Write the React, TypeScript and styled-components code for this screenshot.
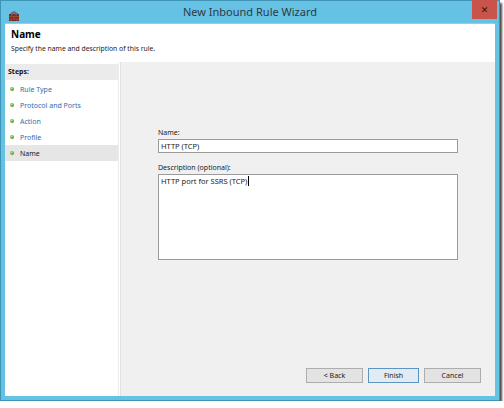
import styled, { createGlobalStyle } from "styled-components";

const GlobalStyle = createGlobalStyle`
  html, body {
    margin: 0;
    padding: 0;
    background: #ffffff;
  }
  body {
    font-family: "Noto Sans", "Liberation Sans", sans-serif;
  }
`;

const Window = styled.div`
  width: 500px;
  height: 401px;
  box-sizing: border-box;
  background: #66c2e5;
  border: 1px solid #3f93b4;
  box-shadow: 2px 3px 2px rgba(40, 40, 40, 0.85);
  display: flex;
  flex-direction: column;
`;

const TitleBar = styled.div`
  height: 22px;
  flex: none;
  display: grid;
  grid-template-columns: 1fr auto 1fr;
  align-items: start;
`;

const TitleIcon = styled.div`
  padding: 4px 0 0 7px;
  height: 12px;
`;

const TitleText = styled.div`
  font-size: 11px;
  line-height: 22px;
  color: #2e3a40;
`;

const CloseButton = styled.div`
  justify-self: end;
  width: 25px;
  height: 19px;
  margin-right: 2px;
  margin-top: -1px;
  background: #c8544c;
  color: #2a1210;
  font-family: "DejaVu Sans", sans-serif;
  font-weight: bold;
  font-size: 9px;
  display: flex;
  align-items: center;
  justify-content: center;
`;

const Client = styled.div`
  flex: 1;
  margin: 0 4px 4px 4px;
  background: #ffffff;
  display: flex;
  flex-direction: column;
  border-top: 1px solid #8fd0ea;
`;

const Header = styled.div`
  height: 38px;
  flex: none;
  padding: 3px 0 0 6px;
  box-sizing: border-box;
`;

const Heading = styled.div`
  font-size: 10px;
  font-weight: bold;
  color: #000;
  line-height: 15px;
`;

const SubHeading = styled.div`
  font-size: 6.8px;
  color: #222;
  line-height: 14px;
`;

const Body = styled.div`
  flex: 1;
  display: flex;
`;

const StepsPane = styled.div`
  width: 113px;
  flex: none;
  padding-top: 2px;
  border-right: 1px solid #ececec;
  background: #ffffff;
`;

const StepsTitle = styled.div`
  height: 16px;
  line-height: 16px;
  padding-left: 3px;
  background: #ebebeb;
  font-size: 7px;
  font-weight: bold;
  color: #111;
  margin-bottom: 1px;
`;

const StepRow = styled.div<{ $current?: boolean }>`
  height: 16px;
  display: flex;
  align-items: center;
  gap: 6px;
  padding-left: 5px;
  background: ${(p) => (p.$current ? "#e6e6e6" : "transparent")};
  font-size: 7px;
  color: ${(p) => (p.$current ? "#1a1a1a" : "#2f6cae")};
`;

const Bullet = styled.span`
  width: 4px;
  height: 4px;
  border-radius: 50%;
  background: radial-gradient(circle at 35% 35%, #b8e08c, #4c9a2a 70%);
  flex: none;
`;

const MainPane = styled.div`
  flex: 1;
  background: #f0f0f0;
  border-left: 1px solid #e2e2e2;
  margin-left: 1px;
  display: flex;
  flex-direction: column;
  padding: 66px 37px 13px 37px;
`;

const Label = styled.div`
  font-size: 7px;
  color: #222;
  line-height: 10px;
  margin-bottom: 1px;
`;

const TextBox = styled.div<{ $tall?: boolean }>`
  height: ${(p) => (p.$tall ? "86px" : "14px")};
  box-sizing: border-box;
  background: #ffffff;
  border: 1px solid #9a9a9a;
  padding: 1px 2px;
  font-size: 7.5px;
  line-height: 11px;
  color: #1a1a1a;
  margin-bottom: 10px;
`;

const Caret = styled.span`
  display: inline-block;
  width: 1px;
  height: 10px;
  background: #000;
  vertical-align: -2px;
  margin-left: 1px;
`;

const ButtonRow = styled.div`
  margin-top: auto;
  display: flex;
  justify-content: flex-end;
  gap: 5px;
  margin-right: -23px;
`;

const Button = styled.div<{ $primary?: boolean }>`
  width: ${(p) => (p.$primary ? "51px" : "57px")};
  height: 15px;
  box-sizing: border-box;
  border: 1px solid ${(p) => (p.$primary ? "#5a95c4" : "#adadad")};
  background: ${(p) => (p.$primary ? "#e3ebf2" : "#e3e3e3")};
  font-size: 7px;
  color: #222;
  display: flex;
  align-items: center;
  justify-content: center;
`;

const steps = ["Rule Type", "Protocol and Ports", "Action", "Profile", "Name"];

function FirewallIcon() {
  return (
    <svg width="12" height="12" viewBox="0 0 12 12">
      <rect x="1" y="4" width="10" height="7" fill="#7a2b22" />
      <path d="M1 6.5h10M1 9h10M4 4v2.5M8 4v2.5M6 6.5V9M3 9v2M9 9v2" stroke="#b05a44" strokeWidth="0.6" />
      <path d="M6 1l4 2.5-1.5 1.5L6 3.2 3.5 5 2 3.5z" fill="#5a6a78" />
    </svg>
  );
}

export default function App() {
  return (
    <>
      <GlobalStyle />
      <Window>
        <TitleBar>
          <TitleIcon>
            <FirewallIcon />
          </TitleIcon>
          <TitleText>New Inbound Rule Wizard</TitleText>
          <CloseButton>✕</CloseButton>
        </TitleBar>
        <Client>
          <Header>
            <Heading>Name</Heading>
            <SubHeading>Specify the name and description of this rule.</SubHeading>
          </Header>
          <Body>
            <StepsPane>
              <StepsTitle>Steps:</StepsTitle>
              {steps.map((s) => (
                <StepRow key={s} $current={s === "Name"}>
                  <Bullet />
                  {s}
                </StepRow>
              ))}
            </StepsPane>
            <MainPane>
              <Label>Name:</Label>
              <TextBox>HTTP (TCP)</TextBox>
              <Label>Description (optional):</Label>
              <TextBox $tall>
                HTTP port for SSRS (TCP)
                <Caret />
              </TextBox>
              <ButtonRow>
                <Button>&lt; Back</Button>
                <Button $primary>Finish</Button>
                <Button>Cancel</Button>
              </ButtonRow>
            </MainPane>
          </Body>
        </Client>
      </Window>
    </>
  );
}
